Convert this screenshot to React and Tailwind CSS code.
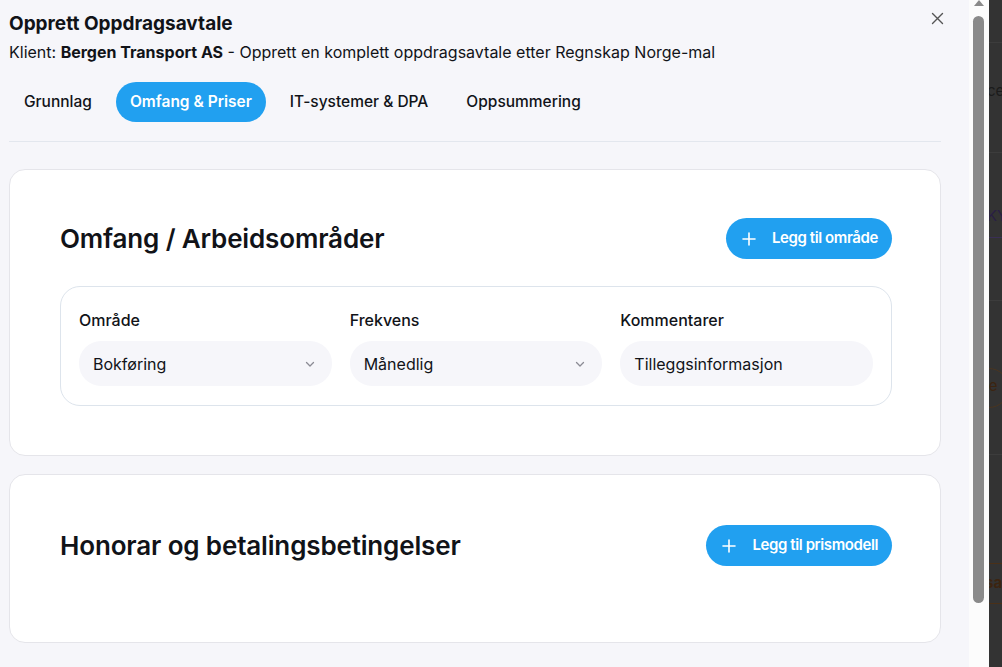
import React from 'react';

const tabs = ['Grunnlag', 'Omfang & Priser', 'IT-systemer & DPA', 'Oppsummering'];

const Plus = () => (
    <svg width="14" height="14" viewBox="0 0 14 14" fill="none" stroke="currentColor" strokeWidth="1.6" strokeLinecap="round">
        <path d="M7 1v12M1 7h12" />
    </svg>
);

const Chevron = () => (
    <svg width="12" height="12" viewBox="0 0 12 12" fill="none" stroke="#8b8b94" strokeWidth="1.3" strokeLinecap="round" strokeLinejoin="round">
        <path d="M2.5 4.5 6 8l3.5-3.5" />
    </svg>
);

const AddButton = ({ label }) => (
    <button className="flex items-center h-[41px] pl-[16px] pr-[14px] rounded-full bg-[#21a0f0] text-white text-[15px] font-semibold tracking-[-0.4px]">
        <span className="w-[14px] flex justify-center"><Plus /></span>
        <span className="ml-[16px]">{label}</span>
    </button>
);

const Field = ({ label, value, select }) => (
    <div className="flex flex-col">
        <label className="text-base leading-6 font-medium text-[#111318]">{label}</label>
        <div className="mt-[9px] h-[45px] rounded-[22px] bg-[#f6f6fa] flex items-center justify-between pl-[14px] pr-[16px] text-base text-[#111318]">
            <span>{value}</span>
            {select && <Chevron />}
        </div>
    </div>
);

const App = () => {
    return (
        <div className="w-[1002px] h-[667px] flex overflow-hidden font-['Inter',sans-serif] text-[#111318]">
            {/* modal body */}
            <div className="w-[969px] h-full bg-[#f6f6fa] pl-[9px] pr-[28px] pt-[10px] relative">
                <button className="absolute top-[8px] right-[21px] text-[#555] p-1">
                    <svg width="13" height="13" viewBox="0 0 13 13" stroke="currentColor" strokeWidth="1.4" strokeLinecap="round">
                        <path d="M1.5 1.5l10 10M11.5 1.5l-10 10" />
                    </svg>
                </button>
                <h1 className="text-[19px] leading-7 font-bold">Opprett Oppdragsavtale</h1>
                <p className="mt-[3px] text-base leading-[22px]">
                    Klient: <span className="font-bold">Bergen Transport AS</span> - Opprett en komplett oppdragsavtale etter Regnskap Norge-mal
                </p>

                <div className="mt-[19px] flex gap-[10px] pl-px">
                    {tabs.map((t, i) => (
                        <button
                            key={t}
                            className={i === 1
                                ? 'h-10 px-[14px] rounded-full bg-[#21a0f0] text-white text-[15.5px] font-semibold'
                                : 'h-10 px-[14px] rounded-full text-[15.5px] font-medium text-[#111318]'}
                        >
                            {t}
                        </button>
                    ))}
                </div>
                <div className="mt-[19px] border-t border-[#e3e7ee]" />

                <div className="mt-[27px] bg-white rounded-2xl border border-[#e5e5ea] pt-12 pb-[49px] pl-[50px] pr-12">
                    <div className="flex items-center justify-between">
                        <h2 className="text-[26px] font-semibold tracking-[-0.15px]">Omfang / Arbeidsområder</h2>
                        <AddButton label="Legg til område" />
                    </div>
                    <div className="mt-[27px] border border-[#dde4ec] rounded-[20px] px-[18px] pt-[21px] pb-[19px] grid grid-cols-3 gap-[18px]">
                        <Field label="Område" value="Bokføring" select />
                        <Field label="Frekvens" value="Månedlig" select />
                        <Field label="Kommentarer" value="Tilleggsinformasjon" />
                    </div>
                </div>

                <div className="mt-[18px] bg-white rounded-2xl border border-[#e5e5ea] pl-[50px] pr-12 pt-[50px] pb-[28px] h-[169px]">
                    <div className="flex items-center justify-between">
                        <h2 className="text-[26px] font-semibold tracking-[-0.15px]">Honorar og betalingsbetingelser</h2>
                        <AddButton label="Legg til prismodell" />
                    </div>
                </div>
            </div>

            {/* scrollbar */}
            <div className="w-[20px] h-full bg-[#fcfcfc] relative">
                <div className="absolute top-0 left-[5px] w-0 h-0 border-l-[5px] border-r-[5px] border-b-[6px] border-l-transparent border-r-transparent border-b-[#8a8a8a]" />
                <div className="absolute top-[16px] left-[4px] w-[11px] h-[587px] rounded-full bg-[#8a8a8a]" />
            </div>

            {/* page behind the modal */}
            <div className="flex-1 h-full bg-[#333333] overflow-hidden relative text-[15px]">
                <div className="absolute top-[42px] left-0 w-full border-t border-[#3c3c3c]" />
                <div className="absolute top-[80px] -left-[2px] text-[#1b1b1b]">ce</div>
                <div className="absolute top-[152px] left-0 w-full border-t border-[#3c3c3c]" />
                <div className="absolute top-[205px] -left-[2px] text-[#2a1f44]">KY</div>
                <div className="absolute top-[237px] left-0 w-full border-t border-[#3a2f55]" />
                <div className="absolute top-[300px] left-0 w-full border-t border-[#3c3c3c]" />
                <div className="absolute top-[368px] left-[-20px] w-[40px] h-[40px] rounded-full border border-[#4a3520]" />
                <div className="absolute top-[375px] -left-[4px] text-[#3c2410]">le</div>
                <div className="absolute top-[454px] left-0 w-full border-t border-[#3c3c3c]" />
                <div className="absolute top-[563px] left-0 w-full border-t border-[#4a3018]" />
                <div className="absolute top-[572px] -left-[4px] text-[#3c2410] font-bold">sa</div>
                <div className="absolute top-[603px] left-0 w-full border-t border-[#4a3018]" />
            </div>
        </div>
    );
};

export default App;
